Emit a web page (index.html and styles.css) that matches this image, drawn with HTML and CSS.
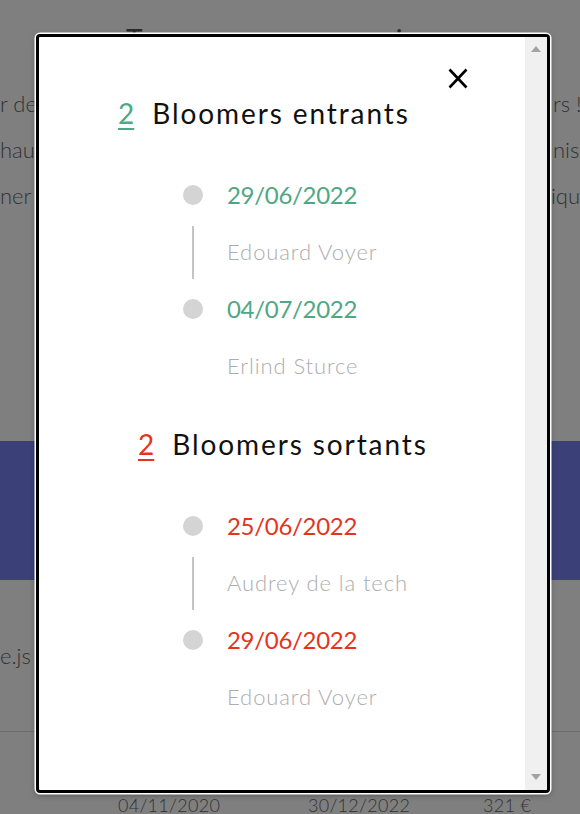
FILE: index.html
```html
<!DOCTYPE html>
<html lang="fr">
<head>
<meta charset="utf-8">
<title>Bloomers</title>
<link rel="stylesheet" href="styles.css">
</head>
<body>
<div class="page">
  <h1 class="page-title">Turnover comparaison</h1>
  <div class="intro">
    <div class="intro-line"><span class="cut-left">r de</span><span class="cut-right">rs !</span></div>
    <div class="intro-line"><span class="cut-left">haut</span><span class="cut-right">nis</span></div>
    <div class="intro-line"><span class="cut-left">ner</span><span class="cut-right">iqu</span></div>
  </div>
  <div class="band"></div>
  <div class="tech">e.js</div>
  <div class="table-row"><span class="c1">04/11/2020</span><span class="c2">30/12/2022</span><span class="c3">321 €</span></div>
</div>

<div class="modal">
  <div class="modal-body">
    <button class="close" aria-label="Fermer">
      <svg width="20" height="21" viewBox="0 0 20 21"><path d="M1.5 1.5 L18.5 19.5 M18.5 1.5 L1.5 19.5" stroke="#000" stroke-width="2.6" fill="none"/></svg>
    </button>

    <h2 class="section-title in"><span class="count">2</span>Bloomers entrants</h2>
    <ul class="timeline in">
      <li class="row"><span class="dot"></span><span class="date">29/06/2022</span></li>
      <li class="row"><span class="rail"><span class="line"></span></span><span class="name">Edouard Voyer</span></li>
      <li class="row"><span class="dot"></span><span class="date">04/07/2022</span></li>
      <li class="row"><span class="rail"></span><span class="name">Erlind Sturce</span></li>
    </ul>

    <h2 class="section-title out"><span class="count">2</span>Bloomers sortants</h2>
    <ul class="timeline out">
      <li class="row"><span class="dot"></span><span class="date">25/06/2022</span></li>
      <li class="row"><span class="rail"><span class="line"></span></span><span class="name">Audrey de la tech</span></li>
      <li class="row"><span class="dot"></span><span class="date">29/06/2022</span></li>
      <li class="row"><span class="rail"></span><span class="name">Edouard Voyer</span></li>
    </ul>
  </div>
  <div class="scrollbar">
    <span class="arrow up"></span>
    <span class="arrow down"></span>
  </div>
</div>
</body>
</html>
```

FILE: styles.css
```css
html, body {
  margin: 0;
  padding: 0;
}
body {
  width: 580px;
  height: 814px;
  overflow: hidden;
  background: #7f7f7f;
  font-family: "Lato", "Liberation Sans", sans-serif;
  position: relative;
}
.page {
  color: #323232;
}
.page-title {
  margin: 19px 0 0 126px;
  font-size: 28px;
  line-height: 40px;
  font-weight: 400;
  white-space: nowrap;
  color: #2a2a2a;
  letter-spacing: 3px;
}
.intro {
  margin-top: 22px;
}
.intro-line {
  display: flex;
  height: 46px;
  line-height: 46px;
  font-size: 22px;
  font-weight: 300;
}
.cut-left {
  width: 36px;
  white-space: nowrap;
}
.cut-right {
  margin-left: 517px;
  white-space: nowrap;
}
.band {
  margin-top: 222px;
  height: 139px;
  background: #3b4079;
}
.tech {
  margin-top: 61px;
  font-size: 22px;
  line-height: 30px;
  font-weight: 300;
}
.table-row {
  margin-top: 60px;
  border-top: 1px solid #6d6d6d;
  padding-top: 58px;
  display: flex;
  font-size: 18px;
  line-height: 30px;
  font-weight: 300;
  letter-spacing: 0.3px;
}
.c1 { margin-left: 118px; width: 190px; }
.c2 { width: 175px; }

/* Modal */
.modal {
  position: absolute;
  left: 36px;
  top: 34px;
  width: 508px;
  height: 753px;
  border: 3px solid #000;
  border-radius: 4px;
  box-shadow: 0 0 0 1.5px #fff, 0 2px 6px rgba(0,0,0,0.35);
  background: #fff;
  display: flex;
  overflow: hidden;
}
.modal-body {
  flex: 1;
  position: relative;
  padding-top: 56px;
}
.close {
  position: absolute;
  left: 409px;
  top: 31px;
  width: 20px;
  height: 21px;
  padding: 0;
  border: 0;
  background: none;
  display: flex;
}
.section-title {
  margin: 0;
  display: flex;
  align-items: baseline;
  font-size: 28px;
  line-height: 40px;
  font-weight: 400;
  color: #111;
  letter-spacing: 1.9px;
}
.section-title.in { padding-left: 79px; }
.section-title.out { padding-left: 99px; margin-top: 30px; }
.count {
  margin-right: 18px;
  text-decoration: underline;
  text-decoration-thickness: 2px;
  text-underline-offset: 4px;
  letter-spacing: 0;
}
.section-title.in .count { color: #4fa783; }
.section-title.out .count { color: #e5341c; }

.timeline {
  list-style: none;
  margin: 33px 0 0;
  padding: 0 0 0 144px;
}
.row {
  display: flex;
  align-items: center;
  height: 57px;
}
.dot {
  width: 20px;
  height: 20px;
  border-radius: 50%;
  background: #d4d4d4;
  flex: none;
}
.rail {
  width: 20px;
  align-self: stretch;
  display: flex;
  justify-content: center;
  padding: 3px 0 1px;
  flex: none;
}
.line {
  width: 1.5px;
  background: #c4c4c4;
}
.date {
  margin-left: 24px;
  font-size: 24px;
  line-height: 57px;
  letter-spacing: -0.3px;
}
.timeline.in .date { color: #4fa783; }
.timeline.out .date { color: #e5341c; }
.name {
  margin-left: 24px;
  font-size: 22px;
  line-height: 57px;
  font-weight: 300;
  color: #adadad;
  letter-spacing: 0.9px;
}

.scrollbar {
  width: 22px;
  flex: none;
  background: #f0f0f0;
  display: flex;
  flex-direction: column;
  justify-content: space-between;
  align-items: center;
  padding: 9px 0 10px;
}
.arrow {
  width: 0;
  height: 0;
  border-left: 5px solid transparent;
  border-right: 5px solid transparent;
}
.arrow.up { border-bottom: 6px solid #a3a3a3; }
.arrow.down { border-top: 6px solid #a3a3a3; }
```
